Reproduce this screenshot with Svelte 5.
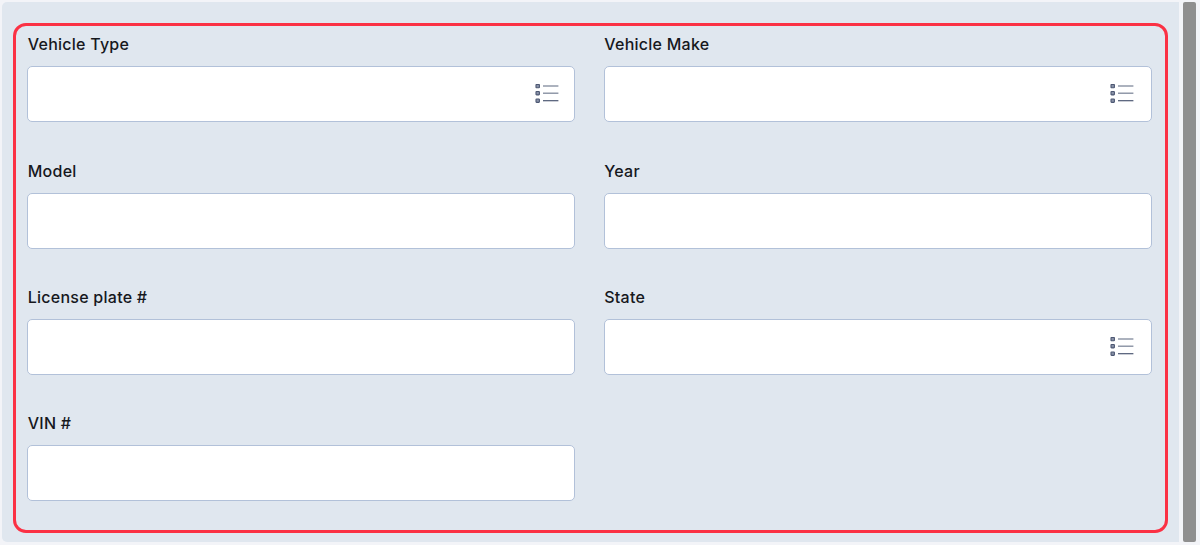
<script>
  const fields = [
    { label: 'Vehicle Type', list: true },
    { label: 'Vehicle Make', list: true },
    { label: 'Model' },
    { label: 'Year' },
    { label: 'License plate #' },
    { label: 'State', list: true },
    { label: 'VIN #' }
  ];
</script>

<div class="page">
  <main class="panel">
    <section class="frame">
      {#each fields as f}
        <div class="field">
          <span class="label">{f.label}</span>
          <div class="input">
            {#if f.list}
              <svg class="icon" width="24" height="20" viewBox="0 0 24 20" fill="none">
                <g fill="#8a93a8" stroke="#4d5873" stroke-width="1.1">
                  <rect x="1" y="0.4" width="3.4" height="3.4" rx=".6" />
                  <rect x="1" y="7.5" width="3.4" height="3.4" rx=".6" />
                  <rect x="1" y="15" width="3.4" height="3.4" rx=".6" />
                </g>
                <path d="M8 2H23.4" stroke="#7f889b" stroke-width="1.3" />
                <path d="M8 9.2H23.4" stroke="#7f889b" stroke-width="1.3" />
                <path d="M8 16.7H23.4" stroke="#4d5873" stroke-width="1.2" />
              </svg>
            {/if}
          </div>
        </div>
      {/each}
    </section>
  </main>
  <div class="scrollbar"></div>
</div>

<style>
  :global(body) {
    margin: 0;
    background: #f3f4f8;
  }
  .page {
    display: flex;
    height: 545px;
    box-sizing: border-box;
    padding: 2px 4px 3px 2px;
    gap: 4px;
    font-family: Inter, "Liberation Sans", sans-serif;
  }
  .panel {
    flex: 1;
    box-sizing: border-box;
    padding: 21px 11px 0;
    background: #e0e7ef;
    border-radius: 5px 0 0 5px;
  }
  .frame {
    box-sizing: border-box;
    height: 510px;
    border: 3.75px solid #fb3144;
    border-radius: 13px;
    padding: 6.25px 10.75px 0 11.25px;
    display: grid;
    grid-template-columns: 548px 548px;
    column-gap: 29px;
    grid-auto-rows: 126.33px;
  }
  .field {
    display: flex;
    flex-direction: column;
  }
  .label {
    height: 34px;
    padding-left: 0.5px;
    font-size: 16px;
    letter-spacing: 0.25px;
    line-height: 24px;
    font-weight: 500;
    color: #16181d;
  }
  .field:nth-child(even) .label {
    padding-left: 0;
  }
  .input {
    box-sizing: border-box;
    height: 56px;
    background: #fff;
    border: 1.5px solid #b2c1d9;
    border-radius: 5px;
    display: flex;
    align-items: center;
    justify-content: flex-end;
    padding-right: 15px;
  }
  .field:nth-child(even) .input {
    padding-right: 17px;
  }
  .icon {
    display: block;
  }
  .scrollbar {
    width: 13px;
    background: #8f8f8f;
    border-radius: 2px;
  }
</style>
